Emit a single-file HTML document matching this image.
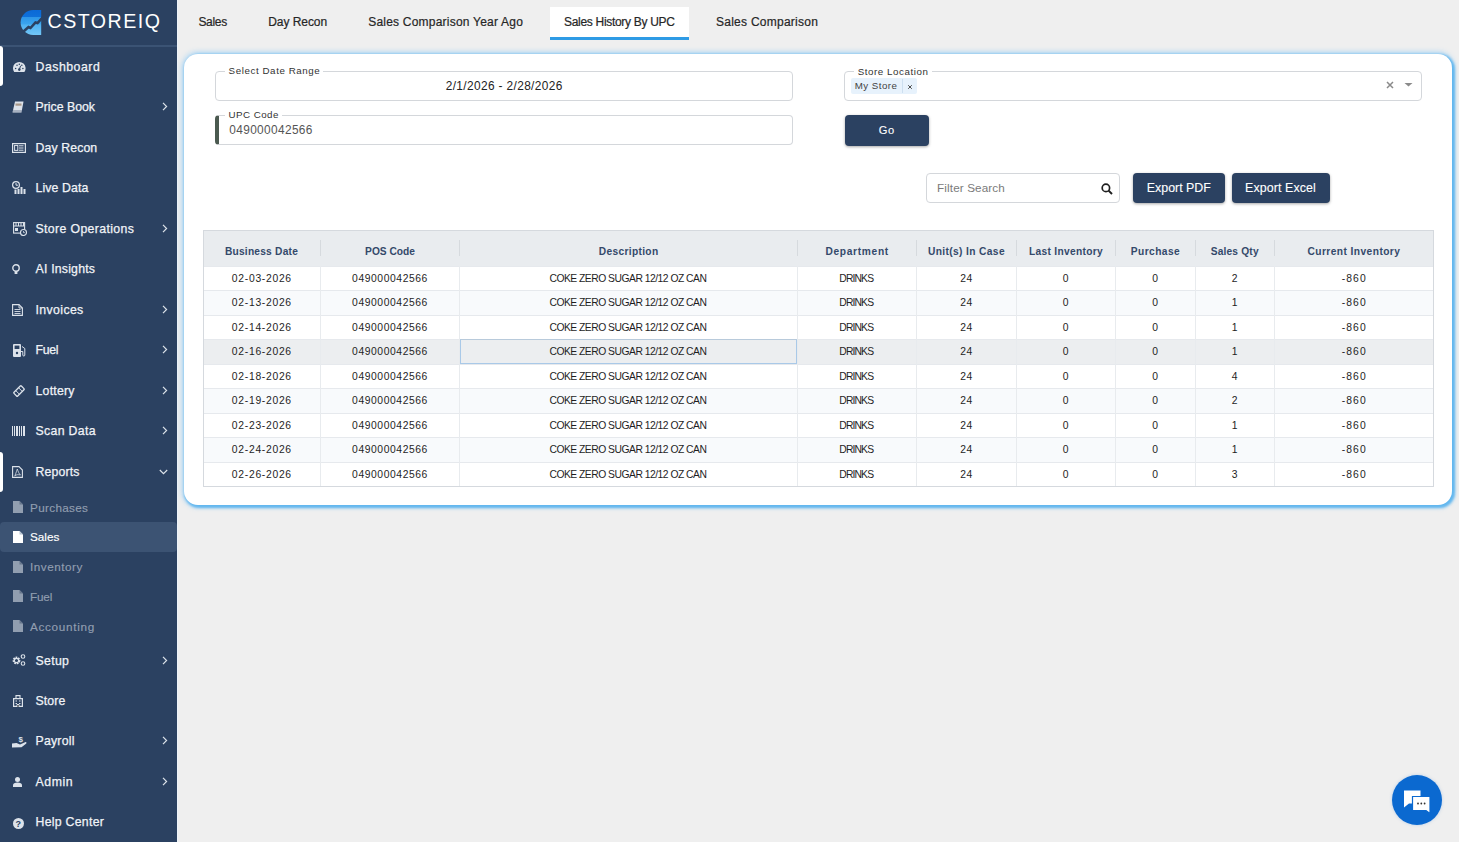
<!DOCTYPE html>
<html><head><meta charset="utf-8">
<style>
*{box-sizing:border-box;margin:0;padding:0}
html,body{width:1459px;height:842px;overflow:hidden;background:#efefef;font-family:"Liberation Sans",sans-serif;position:relative}
.abs{position:absolute}
.tx{position:absolute;white-space:nowrap;line-height:1}
#sb{position:absolute;left:0;top:0;width:177px;height:842px;background:#2b4161}
.card{position:absolute;left:184px;top:53.5px;width:1268px;height:451.5px;background:#fff;border-radius:14px;box-shadow:1.5px 1.5px 2.5px 1.5px rgba(92,180,238,0.95), 0 0 4px 3px rgba(175,215,245,0.7)}
.fld{position:absolute;height:30px;border:1px solid #d4d7db;border-radius:4px;background:#fff}
.gap{position:absolute;top:-2px;height:4px;background:#fff}
.btn{position:absolute;background:#2b4161;border-radius:4px;box-shadow:0 1px 3px rgba(0,0,0,.35)}
</style></head><body>
<div id="sb">
  <svg class="abs" style="left:20px;top:10px" width="22" height="26" viewBox="0 0 22 26">
    <defs><linearGradient id="lg" x1="0" y1="0" x2="0" y2="1"><stop offset="0" stop-color="#0b69d6"/><stop offset="0.27" stop-color="#0f70da"/><stop offset="0.3" stop-color="#2e96e8"/><stop offset="0.55" stop-color="#3aa4ee"/><stop offset="0.6" stop-color="#4fb2f2"/><stop offset="1" stop-color="#72c6f7"/></linearGradient></defs>
    <path d="M21.2 0 V25 H13.1 A12.5 12.5 0 0 1 13.1 0 Z" fill="url(#lg)"/>
    <path d="M3.5 21.5 L8.5 17 L10.5 18 L15.5 12.5 L17.5 13 L22.5 7.5" stroke="#2b4161" stroke-width="2.6" fill="none"/>
  </svg>
  <div class="tx" style="left:47.5px;top:12.4px;font-size:19.6px;color:#fff;letter-spacing:1.5px">CSTOREIQ</div>
  <div class="abs" style="left:0;top:45px;width:177px;height:2px;background:#3b5374"></div>
  <div class="abs" style="left:0;top:46px;width:3px;height:40px;background:#fff;border-radius:0 3px 3px 0"></div>
<div class="abs" style="left:0;top:522px;width:177px;height:29.5px;background:#3c5373;border-radius:4px"></div>
<div class="tx" style="left:35.50px;top:61.20px;font-size:12.291px;letter-spacing:0.521px;color:#f0f3f7;font-weight:normal;-webkit-text-stroke:0.25px #f0f3f7">Dashboard</div>
<svg class="abs" style="left:12.5px;top:62px" width="13" height="10" viewBox="0 0 13 10"><path d="M1.2 10 A6.3 6.3 0 1 1 11.4 10 Z" fill="#dce2ea"/><circle cx="6.3" cy="7.6" r="1.3" fill="#2b4161"/><path d="M6.3 7.6 L7.6 3.8" stroke="#2b4161" stroke-width="1"/><circle cx="2.6" cy="6.5" r=".75" fill="#2b4161"/><circle cx="4" cy="3.3" r=".75" fill="#2b4161"/><circle cx="6.3" cy="2.2" r=".75" fill="#2b4161"/><circle cx="9.9" cy="6.5" r=".75" fill="#2b4161"/><circle cx="8.8" cy="3.3" r=".75" fill="#2b4161"/></svg>
<div class="tx" style="left:35.50px;top:101.30px;font-size:12.291px;letter-spacing:0.008px;color:#f0f3f7;font-weight:normal;-webkit-text-stroke:0.25px #f0f3f7">Price Book</div>
<svg class="abs" style="left:12px;top:101px" width="12" height="12" viewBox="0 0 12 12"><path d="M3 0.5 L11.5 0.5 L9.5 11.5 L0.5 11.5 Z" fill="#dce2ea"/><rect x="3.5" y="2.5" width="6" height="2.2" fill="#a89888"/><path d="M1 10 L9.8 10" stroke="#2b4161" stroke-width=".6"/></svg>
<svg class="abs" style="left:161px;top:101.2px" width="8" height="11" viewBox="0 0 8 11"><path d="M2 1.8 L5.6 5.5 L2 9.2" stroke="#dde3ea" stroke-width="1.2" fill="none"/></svg>
<div class="tx" style="left:35.50px;top:141.60px;font-size:12.291px;letter-spacing:0.113px;color:#f0f3f7;font-weight:normal;-webkit-text-stroke:0.25px #f0f3f7">Day Recon</div>
<svg class="abs" style="left:12px;top:143px" width="14" height="10" viewBox="0 0 14 10"><rect x="0.6" y="0.6" width="12.8" height="8.8" fill="none" stroke="#dce2ea" stroke-width="1.2"/><rect x="2.6" y="2.4" width="3.2" height="5" fill="none" stroke="#dce2ea" stroke-width="1"/><path d="M7 2.8 H11.5 M7 5 H11.5 M7 7.2 H11.5" stroke="#dce2ea" stroke-width="1"/></svg>
<div class="tx" style="left:35.50px;top:181.90px;font-size:12.291px;letter-spacing:0.122px;color:#f0f3f7;font-weight:normal;-webkit-text-stroke:0.25px #f0f3f7">Live Data</div>
<svg class="abs" style="left:12px;top:181px" width="14" height="13" viewBox="0 0 14 13"><circle cx="4" cy="4" r="3.4" fill="none" stroke="#dce2ea" stroke-width="1.2"/><path d="M4 2 V4.2 H6" stroke="#dce2ea" stroke-width="1" fill="none"/><rect x="2.5" y="8.5" width="2" height="4.5" fill="#dce2ea"/><rect x="5.5" y="8" width="2" height="5" fill="#dce2ea"/><rect x="8.5" y="6" width="2" height="7" fill="#dce2ea"/><rect x="11.5" y="8" width="2" height="5" fill="#dce2ea"/></svg>
<div class="tx" style="left:35.50px;top:222.80px;font-size:12.291px;letter-spacing:0.366px;color:#f0f3f7;font-weight:normal;-webkit-text-stroke:0.25px #f0f3f7">Store Operations</div>
<svg class="abs" style="left:13px;top:222px" width="14" height="14" viewBox="0 0 14 14"><rect x="0.6" y="0.6" width="11" height="10.5" fill="none" stroke="#dce2ea" stroke-width="1.1"/><path d="M0.6 4 H11.6 M3 0.6 V4 M5.5 0.6 V4 M8 0.6 V4 M10.5 0.6 V4" stroke="#dce2ea" stroke-width="1"/><rect x="2" y="6" width="3" height="3" fill="#dce2ea"/><circle cx="10.5" cy="10.5" r="3" fill="#2b4161" stroke="#dce2ea" stroke-width="1.1"/><path d="M10.5 9 V10.6 H11.8" stroke="#dce2ea" stroke-width=".8" fill="none"/></svg>
<svg class="abs" style="left:161px;top:222.7px" width="8" height="11" viewBox="0 0 8 11"><path d="M2 1.8 L5.6 5.5 L2 9.2" stroke="#dde3ea" stroke-width="1.2" fill="none"/></svg>
<div class="tx" style="left:35.50px;top:263.10px;font-size:12.291px;letter-spacing:0.212px;color:#f0f3f7;font-weight:normal;-webkit-text-stroke:0.25px #f0f3f7">AI Insights</div>
<svg class="abs" style="left:12px;top:264px" width="8" height="11" viewBox="0 0 8 11"><circle cx="4" cy="4" r="3.2" fill="none" stroke="#dce2ea" stroke-width="1.4"/><path d="M2.6 7 H5.4 V10 H2.6 Z" fill="#dce2ea"/></svg>
<div class="tx" style="left:35.50px;top:303.70px;font-size:12.291px;letter-spacing:0.387px;color:#f0f3f7;font-weight:normal;-webkit-text-stroke:0.25px #f0f3f7">Invoices</div>
<svg class="abs" style="left:12px;top:304px" width="11" height="12" viewBox="0 0 11 12"><path d="M0.6 0.6 H7 L10.4 4 V11.4 H0.6 Z" fill="none" stroke="#dce2ea" stroke-width="1.1"/><path d="M7 0.6 V4 H10.4" stroke="#dce2ea" stroke-width=".9" fill="none"/><path d="M2.5 5.5 H8.5 M2.5 7.5 H8.5 M2.5 9.5 H8.5" stroke="#dce2ea" stroke-width=".9"/></svg>
<svg class="abs" style="left:161px;top:303.6px" width="8" height="11" viewBox="0 0 8 11"><path d="M2 1.8 L5.6 5.5 L2 9.2" stroke="#dde3ea" stroke-width="1.2" fill="none"/></svg>
<div class="tx" style="left:35.50px;top:344.20px;font-size:12.291px;letter-spacing:-0.337px;color:#f0f3f7;font-weight:normal;-webkit-text-stroke:0.25px #f0f3f7">Fuel</div>
<svg class="abs" style="left:13px;top:344px" width="13" height="13" viewBox="0 0 13 13"><rect x="0" y="0" width="8" height="13" rx="1" fill="#dce2ea"/><rect x="1.6" y="1.6" width="4.8" height="3.4" fill="#2b4161"/><circle cx="4" cy="9" r="1.2" fill="#2b4161"/><path d="M9 2.5 L11.8 4.5 V11 A1 1 0 0 1 9.8 11 V7.5 H8" stroke="#dce2ea" stroke-width="1" fill="none"/></svg>
<svg class="abs" style="left:161px;top:344.1px" width="8" height="11" viewBox="0 0 8 11"><path d="M2 1.8 L5.6 5.5 L2 9.2" stroke="#dde3ea" stroke-width="1.2" fill="none"/></svg>
<div class="tx" style="left:35.50px;top:384.70px;font-size:12.291px;letter-spacing:0.238px;color:#f0f3f7;font-weight:normal;-webkit-text-stroke:0.25px #f0f3f7">Lottery</div>
<svg class="abs" style="left:13px;top:385px" width="12" height="12" viewBox="0 0 12 12"><g transform="rotate(-45 6 6)"><rect x="0.8" y="3.4" width="10.4" height="5.2" rx="0.8" fill="none" stroke="#dce2ea" stroke-width="1.3"/><path d="M4 3.4 V8.6 M8 3.4 V8.6" stroke="#dce2ea" stroke-width="0.9"/></g></svg>
<svg class="abs" style="left:161px;top:384.6px" width="8" height="11" viewBox="0 0 8 11"><path d="M2 1.8 L5.6 5.5 L2 9.2" stroke="#dde3ea" stroke-width="1.2" fill="none"/></svg>
<div class="tx" style="left:35.50px;top:425.20px;font-size:12.291px;letter-spacing:0.339px;color:#f0f3f7;font-weight:normal;-webkit-text-stroke:0.25px #f0f3f7">Scan Data</div>
<svg class="abs" style="left:12px;top:426px" width="13" height="10" viewBox="0 0 13 10"><rect x="0" y="0" width="1" height="10" fill="#dce2ea"/><rect x="2" y="0" width="1" height="10" fill="#dce2ea"/><rect x="4" y="0" width="1" height="10" fill="#dce2ea"/><rect x="5" y="0" width="1" height="10" fill="#dce2ea"/><rect x="7" y="0" width="1" height="10" fill="#dce2ea"/><rect x="9" y="0" width="1" height="10" fill="#dce2ea"/><rect x="11" y="0" width="1" height="10" fill="#dce2ea"/><rect x="12" y="0" width="1" height="10" fill="#dce2ea"/></svg>
<svg class="abs" style="left:161px;top:425.1px" width="8" height="11" viewBox="0 0 8 11"><path d="M2 1.8 L5.6 5.5 L2 9.2" stroke="#dde3ea" stroke-width="1.2" fill="none"/></svg>
<div class="tx" style="left:35.50px;top:466.00px;font-size:12.291px;letter-spacing:0.144px;color:#f0f3f7;font-weight:normal;-webkit-text-stroke:0.25px #f0f3f7">Reports</div>
<svg class="abs" style="left:12px;top:466px" width="11" height="12" viewBox="0 0 11 12"><path d="M0.6 0.6 H7 L10.4 4 V11.4 H0.6 Z" fill="none" stroke="#dce2ea" stroke-width="1.1"/><path d="M2.8 10 C4 7 5 4 5.3 3 C6 5 7 8 8.5 9 C6 8.5 4 8.5 2.8 10 Z" stroke="#dce2ea" stroke-width=".8" fill="none"/></svg>
<svg class="abs" style="left:158px;top:467.9px" width="11" height="8" viewBox="0 0 11 8"><path d="M1.8 2 L5.5 5.6 L9.2 2" stroke="#dde3ea" stroke-width="1.2" fill="none"/></svg>
<div class="tx" style="left:35.50px;top:654.60px;font-size:12.291px;letter-spacing:0.320px;color:#f0f3f7;font-weight:normal;-webkit-text-stroke:0.25px #f0f3f7">Setup</div>
<svg class="abs" style="left:12px;top:654px" width="14" height="12" viewBox="0 0 14 12"><circle cx="4.5" cy="6.5" r="2.8" fill="none" stroke="#dce2ea" stroke-width="2.2" stroke-dasharray="1.6 .8"/><circle cx="4.5" cy="6.5" r="2.2" fill="none" stroke="#dce2ea" stroke-width="1.2"/><circle cx="11" cy="2.5" r="1.8" fill="none" stroke="#dce2ea" stroke-width="1.1"/><circle cx="11" cy="9.5" r="1.8" fill="none" stroke="#dce2ea" stroke-width="1.1"/></svg>
<svg class="abs" style="left:161px;top:654.5px" width="8" height="11" viewBox="0 0 8 11"><path d="M2 1.8 L5.6 5.5 L2 9.2" stroke="#dde3ea" stroke-width="1.2" fill="none"/></svg>
<div class="tx" style="left:35.50px;top:694.90px;font-size:12.291px;letter-spacing:0.106px;color:#f0f3f7;font-weight:normal;-webkit-text-stroke:0.25px #f0f3f7">Store</div>
<svg class="abs" style="left:13px;top:695px" width="10" height="12" viewBox="0 0 10 12"><path d="M0.6 11.4 V3.6 H9.4 V11.4 Z" fill="none" stroke="#dce2ea" stroke-width="1.2"/><path d="M3 3.6 V0.6 H7 V3.6" fill="none" stroke="#dce2ea" stroke-width="1.1"/><path d="M2.5 6 H4 M6 6 H7.5 M2.5 8.5 H4 M6 8.5 H7.5" stroke="#dce2ea" stroke-width="1.2"/><path d="M4 11.4 V9.5 H6 V11.4" stroke="#dce2ea" stroke-width="1"/></svg>
<div class="tx" style="left:35.50px;top:735.40px;font-size:12.291px;letter-spacing:0.222px;color:#f0f3f7;font-weight:normal;-webkit-text-stroke:0.25px #f0f3f7">Payroll</div>
<svg class="abs" style="left:12px;top:735px" width="16" height="13" viewBox="0 0 16 13"><path d="M0 8.5 L4.5 8 L8 9.6 L13 7.2 C14.5 6.8 15 8 14 8.8 L9.5 12.2 L0 12.6 Z" fill="#dce2ea"/><text x="6.5" y="6.5" font-size="8" fill="#dce2ea" font-family="Liberation Sans" font-weight="bold">$</text></svg>
<svg class="abs" style="left:161px;top:735.3px" width="8" height="11" viewBox="0 0 8 11"><path d="M2 1.8 L5.6 5.5 L2 9.2" stroke="#dde3ea" stroke-width="1.2" fill="none"/></svg>
<div class="tx" style="left:35.50px;top:776.00px;font-size:12.291px;letter-spacing:0.590px;color:#f0f3f7;font-weight:normal;-webkit-text-stroke:0.25px #f0f3f7">Admin</div>
<svg class="abs" style="left:12.8px;top:777px" width="9" height="10" viewBox="0 0 9 10"><circle cx="4.5" cy="2.5" r="2.5" fill="#dce2ea"/><path d="M0 10 V8.2 C0 6.4 1.8 5.6 4.5 5.6 C7.2 5.6 9 6.4 9 8.2 V10 Z" fill="#dce2ea"/></svg>
<svg class="abs" style="left:161px;top:775.9px" width="8" height="11" viewBox="0 0 8 11"><path d="M2 1.8 L5.6 5.5 L2 9.2" stroke="#dde3ea" stroke-width="1.2" fill="none"/></svg>
<div class="tx" style="left:35.50px;top:816.30px;font-size:12.291px;letter-spacing:0.282px;color:#f0f3f7;font-weight:normal;-webkit-text-stroke:0.25px #f0f3f7">Help Center</div>
<svg class="abs" style="left:12.5px;top:817.5px" width="11" height="11" viewBox="0 0 11 11"><circle cx="5.5" cy="5.5" r="5.5" fill="#dce2ea"/><text x="2.6" y="9" font-size="9" fill="#2b4161" font-family="Liberation Sans" font-weight="bold">?</text></svg>
<div class="tx" style="left:30.00px;top:501.67px;font-size:11.732px;letter-spacing:0.321px;color:#919eb0;font-weight:normal;-webkit-text-stroke:0.15px #919eb0">Purchases</div>
<svg class="abs" style="left:12.5px;top:501.1px" width="10" height="12" viewBox="0 0 10 12"><path d="M0 0 H6.5 L10 3.5 V12 H0 Z" fill="#919eb0"/><path d="M6.5 0 V3.5 H10" fill="#66768c"/></svg>
<div class="tx" style="left:30.00px;top:531.47px;font-size:11.732px;letter-spacing:-0.012px;color:#ffffff;font-weight:normal;-webkit-text-stroke:0.15px #ffffff">Sales</div>
<svg class="abs" style="left:12.5px;top:530.9px" width="10" height="12" viewBox="0 0 10 12"><path d="M0 0 H6.5 L10 3.5 V12 H0 Z" fill="#ffffff"/><path d="M6.5 0 V3.5 H10" fill="#b8c4d2"/></svg>
<div class="tx" style="left:30.00px;top:561.17px;font-size:11.732px;letter-spacing:0.505px;color:#919eb0;font-weight:normal;-webkit-text-stroke:0.15px #919eb0">Inventory</div>
<svg class="abs" style="left:12.5px;top:560.6px" width="10" height="12" viewBox="0 0 10 12"><path d="M0 0 H6.5 L10 3.5 V12 H0 Z" fill="#919eb0"/><path d="M6.5 0 V3.5 H10" fill="#66768c"/></svg>
<div class="tx" style="left:30.00px;top:590.57px;font-size:11.732px;letter-spacing:-0.174px;color:#919eb0;font-weight:normal;-webkit-text-stroke:0.15px #919eb0">Fuel</div>
<svg class="abs" style="left:12.5px;top:590.0px" width="10" height="12" viewBox="0 0 10 12"><path d="M0 0 H6.5 L10 3.5 V12 H0 Z" fill="#919eb0"/><path d="M6.5 0 V3.5 H10" fill="#66768c"/></svg>
<div class="tx" style="left:30.00px;top:620.57px;font-size:11.732px;letter-spacing:0.695px;color:#919eb0;font-weight:normal;-webkit-text-stroke:0.15px #919eb0">Accounting</div>
<svg class="abs" style="left:12.5px;top:620.0px" width="10" height="12" viewBox="0 0 10 12"><path d="M0 0 H6.5 L10 3.5 V12 H0 Z" fill="#919eb0"/><path d="M6.5 0 V3.5 H10" fill="#66768c"/></svg>
<div class="abs" style="left:0;top:452px;width:3px;height:40px;background:#fff;border-radius:0 3px 3px 0"></div>
</div>
<div class="abs" style="left:177px;top:0;width:1px;height:842px;background:#edf3f9"></div>
<div class="abs" style="left:550px;top:7px;width:139px;height:33px;background:#fff;border-bottom:3px solid #2f9be5"></div>
<div class="tx" style="left:198.40px;top:15.93px;font-size:12.011px;letter-spacing:-0.312px;color:#262626;font-weight:normal;-webkit-text-stroke:0.2px #262626">Sales</div>
<div class="tx" style="left:268.20px;top:15.93px;font-size:12.011px;letter-spacing:-0.052px;color:#262626;font-weight:normal;-webkit-text-stroke:0.2px #262626">Day Recon</div>
<div class="tx" style="left:368.20px;top:15.93px;font-size:12.011px;letter-spacing:0.218px;color:#262626;font-weight:normal;-webkit-text-stroke:0.2px #262626">Sales Comparison Year Ago</div>
<div class="tx" style="left:564.00px;top:15.93px;font-size:12.011px;letter-spacing:-0.306px;color:#262626;font-weight:normal;-webkit-text-stroke:0.2px #262626">Sales History By UPC</div>
<div class="tx" style="left:716.00px;top:15.93px;font-size:12.011px;letter-spacing:0.257px;color:#262626;font-weight:normal;-webkit-text-stroke:0.2px #262626">Sales Comparison</div>
<div class="card"></div>
<div class="fld" style="left:215px;top:71px;width:578px;height:29.5px"></div>
<div class="gap" style="left:225px;top:69px;width:98px"></div>
<div class="fld" style="left:215px;top:115px;width:578px;height:29.5px;border-left:4px solid #4b5a50"></div>
<div class="gap" style="left:225px;top:113px;width:57px"></div>
<div class="fld" style="left:844px;top:71px;width:578px;height:29.5px"></div>
<div class="gap" style="left:854px;top:69px;width:78px"></div>
<div class="abs" style="left:851px;top:78.2px;width:65.5px;height:15.5px;background:#e7f2fc;border-radius:2px"></div>
<div class="abs" style="left:902px;top:79px;width:1px;height:14px;background:#cddff0"></div>
<svg class="abs" style="left:907px;top:83.5px" width="6" height="6" viewBox="0 0 6 6"><path d="M1.2 1.2 L4.8 4.8 M4.8 1.2 L1.2 4.8" stroke="#444" stroke-width="0.95"/></svg>
<svg class="abs" style="left:1386px;top:80.5px" width="8" height="8" viewBox="0 0 8 8"><path d="M1 1 L7 7 M7 1 L1 7" stroke="#8a8a8a" stroke-width="1.5"/></svg>
<svg class="abs" style="left:1404px;top:83px" width="9" height="4" viewBox="0 0 9 4"><path d="M0.5 0 L8.5 0 L4.5 3.5 Z" fill="#8a8a8a"/></svg>
<div class="btn" style="left:844.5px;top:115px;width:84.5px;height:30.5px"></div>
<div class="fld" style="left:926px;top:172.5px;width:194px;height:30.5px;border-radius:4px"></div>
<svg class="abs" style="left:1100.5px;top:182.5px" width="12" height="12" viewBox="0 0 12 12"><circle cx="4.9" cy="4.9" r="3.7" fill="none" stroke="#1f1f1f" stroke-width="1.7"/><path d="M7.6 7.6 L11 11" stroke="#1f1f1f" stroke-width="2"/></svg>
<div class="btn" style="left:1133px;top:172.5px;width:91.5px;height:30.5px"></div>
<div class="btn" style="left:1232px;top:172.5px;width:98px;height:30.5px"></div>
<div class="tx" style="left:228.60px;top:66.32px;font-size:9.777px;letter-spacing:0.577px;color:#333;font-weight:normal;">Select Date Range</div>
<div class="tx" style="left:445.70px;top:80.75px;font-size:11.872px;letter-spacing:0.375px;color:#222;font-weight:normal;">2/1/2026 - 2/28/2026</div>
<div class="tx" style="left:228.60px;top:110.12px;font-size:9.777px;letter-spacing:0.438px;color:#333;font-weight:normal;">UPC Code</div>
<div class="tx" style="left:229.30px;top:124.75px;font-size:11.872px;letter-spacing:0.361px;color:#555;font-weight:normal;">049000042566</div>
<div class="tx" style="left:857.70px;top:66.62px;font-size:9.777px;letter-spacing:0.558px;color:#333;font-weight:normal;">Store Location</div>
<div class="tx" style="left:854.80px;top:81.12px;font-size:9.777px;letter-spacing:0.440px;color:#444;font-weight:normal;">My Store</div>
<div class="tx" style="left:878.80px;top:124.84px;font-size:11.173px;letter-spacing:0.595px;color:#fff;font-weight:normal;-webkit-text-stroke:0.1px #fff">Go</div>
<div class="tx" style="left:937.10px;top:181.87px;font-size:11.732px;letter-spacing:0.108px;color:#7a7a7a;font-weight:normal;">Filter Search</div>
<div class="tx" style="left:1146.80px;top:181.78px;font-size:12.430px;letter-spacing:-0.016px;color:#fff;font-weight:normal;-webkit-text-stroke:0.1px #fff">Export PDF</div>
<div class="tx" style="left:1245.00px;top:181.78px;font-size:12.430px;letter-spacing:0.093px;color:#fff;font-weight:normal;-webkit-text-stroke:0.1px #fff">Export Excel</div>
<div class="abs" style="left:203px;top:230px;width:1231px;height:35.5px;background:#e9ecef"></div>
<div class="abs" style="left:203px;top:265.5px;width:1231px;height:24.5px;background:#ffffff;border-top:1px solid #e6e9ed"></div>
<div class="abs" style="left:203px;top:290.0px;width:1231px;height:24.5px;background:#f8fafc;border-top:1px solid #e6e9ed"></div>
<div class="abs" style="left:203px;top:314.5px;width:1231px;height:24.5px;background:#ffffff;border-top:1px solid #e6e9ed"></div>
<div class="abs" style="left:203px;top:339.0px;width:1231px;height:24.5px;background:#eceef0;border-top:1px solid #e6e9ed"></div>
<div class="abs" style="left:203px;top:363.5px;width:1231px;height:24.5px;background:#ffffff;border-top:1px solid #e6e9ed"></div>
<div class="abs" style="left:203px;top:388.0px;width:1231px;height:24.5px;background:#f8fafc;border-top:1px solid #e6e9ed"></div>
<div class="abs" style="left:203px;top:412.5px;width:1231px;height:24.5px;background:#ffffff;border-top:1px solid #e6e9ed"></div>
<div class="abs" style="left:203px;top:437.0px;width:1231px;height:24.5px;background:#f8fafc;border-top:1px solid #e6e9ed"></div>
<div class="abs" style="left:203px;top:461.5px;width:1231px;height:24.5px;background:#ffffff;border-top:1px solid #e6e9ed"></div>
<div class="abs" style="left:460px;top:339.0px;width:337px;height:24.5px;border:1px solid #a9c9e8;border-top-color:#b8cadb"></div>
<div class="abs" style="left:319.5px;top:265.5px;width:1px;height:220.5px;background:#e8ebee"></div>
<div class="abs" style="left:319.5px;top:240px;width:1px;height:16px;background:#d6dade"></div>
<div class="abs" style="left:459.0px;top:265.5px;width:1px;height:220.5px;background:#e8ebee"></div>
<div class="abs" style="left:459.0px;top:240px;width:1px;height:16px;background:#d6dade"></div>
<div class="abs" style="left:796.5px;top:265.5px;width:1px;height:220.5px;background:#e8ebee"></div>
<div class="abs" style="left:796.5px;top:240px;width:1px;height:16px;background:#d6dade"></div>
<div class="abs" style="left:915.9px;top:265.5px;width:1px;height:220.5px;background:#e8ebee"></div>
<div class="abs" style="left:915.9px;top:240px;width:1px;height:16px;background:#d6dade"></div>
<div class="abs" style="left:1015.7px;top:265.5px;width:1px;height:220.5px;background:#e8ebee"></div>
<div class="abs" style="left:1015.7px;top:240px;width:1px;height:16px;background:#d6dade"></div>
<div class="abs" style="left:1114.5px;top:265.5px;width:1px;height:220.5px;background:#e8ebee"></div>
<div class="abs" style="left:1114.5px;top:240px;width:1px;height:16px;background:#d6dade"></div>
<div class="abs" style="left:1194.5px;top:265.5px;width:1px;height:220.5px;background:#e8ebee"></div>
<div class="abs" style="left:1194.5px;top:240px;width:1px;height:16px;background:#d6dade"></div>
<div class="abs" style="left:1273.5px;top:265.5px;width:1px;height:220.5px;background:#e8ebee"></div>
<div class="abs" style="left:1273.5px;top:240px;width:1px;height:16px;background:#d6dade"></div>
<div class="abs" style="left:202.5px;top:230px;width:1231.5px;height:256.5px;border:1px solid #d5d9de"></div>
<div class="tx" style="left:224.90px;top:246.57px;font-size:10.196px;letter-spacing:0.228px;color:#34496a;font-weight:bold;">Business Date</div>
<div class="tx" style="left:365.10px;top:246.57px;font-size:10.196px;letter-spacing:0.007px;color:#34496a;font-weight:bold;">POS Code</div>
<div class="tx" style="left:598.70px;top:246.57px;font-size:10.196px;letter-spacing:0.341px;color:#34496a;font-weight:bold;">Description</div>
<div class="tx" style="left:825.40px;top:246.57px;font-size:10.196px;letter-spacing:0.694px;color:#34496a;font-weight:bold;">Department</div>
<div class="tx" style="left:928.00px;top:246.57px;font-size:10.196px;letter-spacing:0.373px;color:#34496a;font-weight:bold;">Unit(s) In Case</div>
<div class="tx" style="left:1028.90px;top:246.57px;font-size:10.196px;letter-spacing:0.324px;color:#34496a;font-weight:bold;">Last Inventory</div>
<div class="tx" style="left:1130.80px;top:246.57px;font-size:10.196px;letter-spacing:0.428px;color:#34496a;font-weight:bold;">Purchase</div>
<div class="tx" style="left:1210.70px;top:246.57px;font-size:10.196px;letter-spacing:0.178px;color:#34496a;font-weight:bold;">Sales Qty</div>
<div class="tx" style="left:1307.50px;top:246.57px;font-size:10.196px;letter-spacing:0.435px;color:#34496a;font-weight:bold;">Current Inventory</div>
<div class="tx" style="left:231.85px;top:273.75px;font-size:10.335px;letter-spacing:0.715px;color:#1e1e1e;font-weight:normal;">02-03-2026</div>
<div class="tx" style="left:352.10px;top:273.75px;font-size:10.335px;letter-spacing:0.575px;color:#1e1e1e;font-weight:normal;">049000042566</div>
<div class="tx" style="left:549.45px;top:273.75px;font-size:10.335px;letter-spacing:-0.502px;color:#1e1e1e;font-weight:normal;">COKE ZERO SUGAR 12/12 OZ CAN</div>
<div class="tx" style="left:839.35px;top:273.75px;font-size:10.335px;letter-spacing:-0.870px;color:#1e1e1e;font-weight:normal;">DRINKS</div>
<div class="tx" style="left:960.35px;top:273.75px;font-size:10.335px;letter-spacing:0.404px;color:#1e1e1e;font-weight:normal;">24</div>
<div class="tx" style="left:1062.73px;top:273.75px;font-size:10.335px;letter-spacing:0.000px;color:#1e1e1e;font-weight:normal;">0</div>
<div class="tx" style="left:1152.13px;top:273.75px;font-size:10.335px;letter-spacing:0.000px;color:#1e1e1e;font-weight:normal;">0</div>
<div class="tx" style="left:1231.63px;top:273.75px;font-size:10.335px;letter-spacing:0.000px;color:#1e1e1e;font-weight:normal;">2</div>
<div class="tx" style="left:1341.85px;top:273.75px;font-size:10.335px;letter-spacing:1.038px;color:#1e1e1e;font-weight:normal;">-860</div>
<div class="tx" style="left:231.85px;top:298.25px;font-size:10.335px;letter-spacing:0.715px;color:#1e1e1e;font-weight:normal;">02-13-2026</div>
<div class="tx" style="left:352.10px;top:298.25px;font-size:10.335px;letter-spacing:0.575px;color:#1e1e1e;font-weight:normal;">049000042566</div>
<div class="tx" style="left:549.45px;top:298.25px;font-size:10.335px;letter-spacing:-0.502px;color:#1e1e1e;font-weight:normal;">COKE ZERO SUGAR 12/12 OZ CAN</div>
<div class="tx" style="left:839.35px;top:298.25px;font-size:10.335px;letter-spacing:-0.870px;color:#1e1e1e;font-weight:normal;">DRINKS</div>
<div class="tx" style="left:960.35px;top:298.25px;font-size:10.335px;letter-spacing:0.404px;color:#1e1e1e;font-weight:normal;">24</div>
<div class="tx" style="left:1062.73px;top:298.25px;font-size:10.335px;letter-spacing:0.000px;color:#1e1e1e;font-weight:normal;">0</div>
<div class="tx" style="left:1152.13px;top:298.25px;font-size:10.335px;letter-spacing:0.000px;color:#1e1e1e;font-weight:normal;">0</div>
<div class="tx" style="left:1231.63px;top:298.25px;font-size:10.335px;letter-spacing:0.000px;color:#1e1e1e;font-weight:normal;">1</div>
<div class="tx" style="left:1341.85px;top:298.25px;font-size:10.335px;letter-spacing:1.038px;color:#1e1e1e;font-weight:normal;">-860</div>
<div class="tx" style="left:231.85px;top:322.75px;font-size:10.335px;letter-spacing:0.715px;color:#1e1e1e;font-weight:normal;">02-14-2026</div>
<div class="tx" style="left:352.10px;top:322.75px;font-size:10.335px;letter-spacing:0.575px;color:#1e1e1e;font-weight:normal;">049000042566</div>
<div class="tx" style="left:549.45px;top:322.75px;font-size:10.335px;letter-spacing:-0.502px;color:#1e1e1e;font-weight:normal;">COKE ZERO SUGAR 12/12 OZ CAN</div>
<div class="tx" style="left:839.35px;top:322.75px;font-size:10.335px;letter-spacing:-0.870px;color:#1e1e1e;font-weight:normal;">DRINKS</div>
<div class="tx" style="left:960.35px;top:322.75px;font-size:10.335px;letter-spacing:0.404px;color:#1e1e1e;font-weight:normal;">24</div>
<div class="tx" style="left:1062.73px;top:322.75px;font-size:10.335px;letter-spacing:0.000px;color:#1e1e1e;font-weight:normal;">0</div>
<div class="tx" style="left:1152.13px;top:322.75px;font-size:10.335px;letter-spacing:0.000px;color:#1e1e1e;font-weight:normal;">0</div>
<div class="tx" style="left:1231.63px;top:322.75px;font-size:10.335px;letter-spacing:0.000px;color:#1e1e1e;font-weight:normal;">1</div>
<div class="tx" style="left:1341.85px;top:322.75px;font-size:10.335px;letter-spacing:1.038px;color:#1e1e1e;font-weight:normal;">-860</div>
<div class="tx" style="left:231.85px;top:347.25px;font-size:10.335px;letter-spacing:0.715px;color:#1e1e1e;font-weight:normal;">02-16-2026</div>
<div class="tx" style="left:352.10px;top:347.25px;font-size:10.335px;letter-spacing:0.575px;color:#1e1e1e;font-weight:normal;">049000042566</div>
<div class="tx" style="left:549.45px;top:347.25px;font-size:10.335px;letter-spacing:-0.502px;color:#1e1e1e;font-weight:normal;">COKE ZERO SUGAR 12/12 OZ CAN</div>
<div class="tx" style="left:839.35px;top:347.25px;font-size:10.335px;letter-spacing:-0.870px;color:#1e1e1e;font-weight:normal;">DRINKS</div>
<div class="tx" style="left:960.35px;top:347.25px;font-size:10.335px;letter-spacing:0.404px;color:#1e1e1e;font-weight:normal;">24</div>
<div class="tx" style="left:1062.73px;top:347.25px;font-size:10.335px;letter-spacing:0.000px;color:#1e1e1e;font-weight:normal;">0</div>
<div class="tx" style="left:1152.13px;top:347.25px;font-size:10.335px;letter-spacing:0.000px;color:#1e1e1e;font-weight:normal;">0</div>
<div class="tx" style="left:1231.63px;top:347.25px;font-size:10.335px;letter-spacing:0.000px;color:#1e1e1e;font-weight:normal;">1</div>
<div class="tx" style="left:1341.85px;top:347.25px;font-size:10.335px;letter-spacing:1.038px;color:#1e1e1e;font-weight:normal;">-860</div>
<div class="tx" style="left:231.85px;top:371.75px;font-size:10.335px;letter-spacing:0.715px;color:#1e1e1e;font-weight:normal;">02-18-2026</div>
<div class="tx" style="left:352.10px;top:371.75px;font-size:10.335px;letter-spacing:0.575px;color:#1e1e1e;font-weight:normal;">049000042566</div>
<div class="tx" style="left:549.45px;top:371.75px;font-size:10.335px;letter-spacing:-0.502px;color:#1e1e1e;font-weight:normal;">COKE ZERO SUGAR 12/12 OZ CAN</div>
<div class="tx" style="left:839.35px;top:371.75px;font-size:10.335px;letter-spacing:-0.870px;color:#1e1e1e;font-weight:normal;">DRINKS</div>
<div class="tx" style="left:960.35px;top:371.75px;font-size:10.335px;letter-spacing:0.404px;color:#1e1e1e;font-weight:normal;">24</div>
<div class="tx" style="left:1062.73px;top:371.75px;font-size:10.335px;letter-spacing:0.000px;color:#1e1e1e;font-weight:normal;">0</div>
<div class="tx" style="left:1152.13px;top:371.75px;font-size:10.335px;letter-spacing:0.000px;color:#1e1e1e;font-weight:normal;">0</div>
<div class="tx" style="left:1231.63px;top:371.75px;font-size:10.335px;letter-spacing:0.000px;color:#1e1e1e;font-weight:normal;">4</div>
<div class="tx" style="left:1341.85px;top:371.75px;font-size:10.335px;letter-spacing:1.038px;color:#1e1e1e;font-weight:normal;">-860</div>
<div class="tx" style="left:231.85px;top:396.25px;font-size:10.335px;letter-spacing:0.715px;color:#1e1e1e;font-weight:normal;">02-19-2026</div>
<div class="tx" style="left:352.10px;top:396.25px;font-size:10.335px;letter-spacing:0.575px;color:#1e1e1e;font-weight:normal;">049000042566</div>
<div class="tx" style="left:549.45px;top:396.25px;font-size:10.335px;letter-spacing:-0.502px;color:#1e1e1e;font-weight:normal;">COKE ZERO SUGAR 12/12 OZ CAN</div>
<div class="tx" style="left:839.35px;top:396.25px;font-size:10.335px;letter-spacing:-0.870px;color:#1e1e1e;font-weight:normal;">DRINKS</div>
<div class="tx" style="left:960.35px;top:396.25px;font-size:10.335px;letter-spacing:0.404px;color:#1e1e1e;font-weight:normal;">24</div>
<div class="tx" style="left:1062.73px;top:396.25px;font-size:10.335px;letter-spacing:0.000px;color:#1e1e1e;font-weight:normal;">0</div>
<div class="tx" style="left:1152.13px;top:396.25px;font-size:10.335px;letter-spacing:0.000px;color:#1e1e1e;font-weight:normal;">0</div>
<div class="tx" style="left:1231.63px;top:396.25px;font-size:10.335px;letter-spacing:0.000px;color:#1e1e1e;font-weight:normal;">2</div>
<div class="tx" style="left:1341.85px;top:396.25px;font-size:10.335px;letter-spacing:1.038px;color:#1e1e1e;font-weight:normal;">-860</div>
<div class="tx" style="left:231.85px;top:420.75px;font-size:10.335px;letter-spacing:0.715px;color:#1e1e1e;font-weight:normal;">02-23-2026</div>
<div class="tx" style="left:352.10px;top:420.75px;font-size:10.335px;letter-spacing:0.575px;color:#1e1e1e;font-weight:normal;">049000042566</div>
<div class="tx" style="left:549.45px;top:420.75px;font-size:10.335px;letter-spacing:-0.502px;color:#1e1e1e;font-weight:normal;">COKE ZERO SUGAR 12/12 OZ CAN</div>
<div class="tx" style="left:839.35px;top:420.75px;font-size:10.335px;letter-spacing:-0.870px;color:#1e1e1e;font-weight:normal;">DRINKS</div>
<div class="tx" style="left:960.35px;top:420.75px;font-size:10.335px;letter-spacing:0.404px;color:#1e1e1e;font-weight:normal;">24</div>
<div class="tx" style="left:1062.73px;top:420.75px;font-size:10.335px;letter-spacing:0.000px;color:#1e1e1e;font-weight:normal;">0</div>
<div class="tx" style="left:1152.13px;top:420.75px;font-size:10.335px;letter-spacing:0.000px;color:#1e1e1e;font-weight:normal;">0</div>
<div class="tx" style="left:1231.63px;top:420.75px;font-size:10.335px;letter-spacing:0.000px;color:#1e1e1e;font-weight:normal;">1</div>
<div class="tx" style="left:1341.85px;top:420.75px;font-size:10.335px;letter-spacing:1.038px;color:#1e1e1e;font-weight:normal;">-860</div>
<div class="tx" style="left:231.85px;top:445.25px;font-size:10.335px;letter-spacing:0.715px;color:#1e1e1e;font-weight:normal;">02-24-2026</div>
<div class="tx" style="left:352.10px;top:445.25px;font-size:10.335px;letter-spacing:0.575px;color:#1e1e1e;font-weight:normal;">049000042566</div>
<div class="tx" style="left:549.45px;top:445.25px;font-size:10.335px;letter-spacing:-0.502px;color:#1e1e1e;font-weight:normal;">COKE ZERO SUGAR 12/12 OZ CAN</div>
<div class="tx" style="left:839.35px;top:445.25px;font-size:10.335px;letter-spacing:-0.870px;color:#1e1e1e;font-weight:normal;">DRINKS</div>
<div class="tx" style="left:960.35px;top:445.25px;font-size:10.335px;letter-spacing:0.404px;color:#1e1e1e;font-weight:normal;">24</div>
<div class="tx" style="left:1062.73px;top:445.25px;font-size:10.335px;letter-spacing:0.000px;color:#1e1e1e;font-weight:normal;">0</div>
<div class="tx" style="left:1152.13px;top:445.25px;font-size:10.335px;letter-spacing:0.000px;color:#1e1e1e;font-weight:normal;">0</div>
<div class="tx" style="left:1231.63px;top:445.25px;font-size:10.335px;letter-spacing:0.000px;color:#1e1e1e;font-weight:normal;">1</div>
<div class="tx" style="left:1341.85px;top:445.25px;font-size:10.335px;letter-spacing:1.038px;color:#1e1e1e;font-weight:normal;">-860</div>
<div class="tx" style="left:231.85px;top:469.75px;font-size:10.335px;letter-spacing:0.715px;color:#1e1e1e;font-weight:normal;">02-26-2026</div>
<div class="tx" style="left:352.10px;top:469.75px;font-size:10.335px;letter-spacing:0.575px;color:#1e1e1e;font-weight:normal;">049000042566</div>
<div class="tx" style="left:549.45px;top:469.75px;font-size:10.335px;letter-spacing:-0.502px;color:#1e1e1e;font-weight:normal;">COKE ZERO SUGAR 12/12 OZ CAN</div>
<div class="tx" style="left:839.35px;top:469.75px;font-size:10.335px;letter-spacing:-0.870px;color:#1e1e1e;font-weight:normal;">DRINKS</div>
<div class="tx" style="left:960.35px;top:469.75px;font-size:10.335px;letter-spacing:0.404px;color:#1e1e1e;font-weight:normal;">24</div>
<div class="tx" style="left:1062.73px;top:469.75px;font-size:10.335px;letter-spacing:0.000px;color:#1e1e1e;font-weight:normal;">0</div>
<div class="tx" style="left:1152.13px;top:469.75px;font-size:10.335px;letter-spacing:0.000px;color:#1e1e1e;font-weight:normal;">0</div>
<div class="tx" style="left:1231.63px;top:469.75px;font-size:10.335px;letter-spacing:0.000px;color:#1e1e1e;font-weight:normal;">3</div>
<div class="tx" style="left:1341.85px;top:469.75px;font-size:10.335px;letter-spacing:1.038px;color:#1e1e1e;font-weight:normal;">-860</div>
<div class="abs" style="left:1391.5px;top:774.5px;width:50.5px;height:50.5px;border-radius:50%;background:#0b69d0;box-shadow:0 0 3px rgba(120,170,230,.5)"></div>
<svg class="abs" style="left:1403px;top:790px" width="28" height="24" viewBox="0 0 28 24">
  <path d="M1 0.5 H17.5 V13.5 H6 L1 17.5 Z" fill="#fff"/>
  <path d="M9.5 6.5 H27 V23.5 L23 20.5 H9.5 Z" fill="#fff" stroke="#0b69d0" stroke-width="1.2"/>
  <circle cx="15" cy="13.5" r="0.9" fill="#333"/><circle cx="18.3" cy="13.5" r="0.9" fill="#333"/><circle cx="21.6" cy="13.5" r="0.9" fill="#333"/>
</svg>
</body></html>
